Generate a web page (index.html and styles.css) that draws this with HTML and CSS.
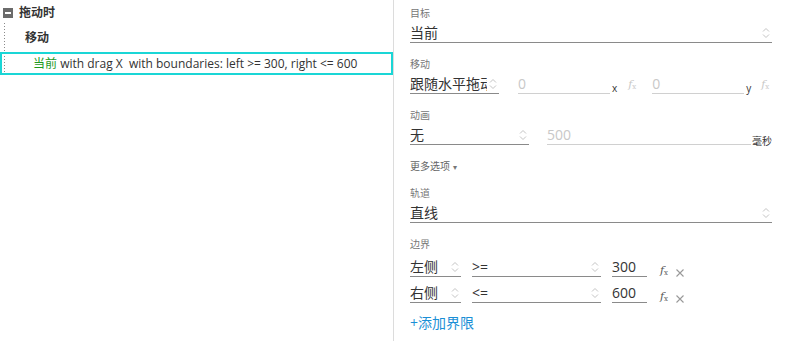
FILE: index.html
```html
<!DOCTYPE html>
<html>
<head>
<meta charset="utf-8">
<link rel="stylesheet" href="styles.css">
</head>
<body>
<div class="app">
  <div class="tree">
    <div class="node event">
      <span class="toggle"></span>
      <span class="event-name">拖动时</span>
    </div>
    <div class="children">
      <div class="node action">移动</div>
      <div class="node target selected"><span class="green">当前</span> with drag X&nbsp; with boundaries: left &gt;= 300, right &lt;= 600</div>
    </div>
  </div>
  <div class="props">
    <div class="field">
      <div class="label">目标</div>
      <div class="select full"><span class="val">当前</span><svg class="chev" viewBox="0 0 8 12"><path d="M1 4.5 L4 1.5 L7 4.5 M1 7.5 L4 10.5 L7 7.5" /></svg></div>
    </div>
    <div class="field">
      <div class="label">移动</div>
      <div class="row">
        <div class="select w-move"><span class="val clip">跟随水平拖动</span><svg class="chev" viewBox="0 0 8 12"><path d="M1 4.5 L4 1.5 L7 4.5 M1 7.5 L4 10.5 L7 7.5" /></svg></div>
        <div class="input w-xy dis">0</div><span class="unit">x</span><span class="fx dim gap"><i>f</i><sub>x</sub></span>
        <div class="input w-xy dis">0</div><span class="unit">y</span><span class="fx dim end"><i>f</i><sub>x</sub></span>
      </div>
    </div>
    <div class="field">
      <div class="label">动画</div>
      <div class="row">
        <div class="select w-anim"><span class="val">无</span><svg class="chev" viewBox="0 0 8 12"><path d="M1 4.5 L4 1.5 L7 4.5 M1 7.5 L4 10.5 L7 7.5" /></svg></div>
        <div class="input w-ms dis">500</div><span class="unit ms">毫秒</span>
      </div>
    </div>
    <div class="more">更多选项 <span class="tri">▾</span></div>
    <div class="field">
      <div class="label">轨道</div>
      <div class="select full"><span class="val">直线</span><svg class="chev" viewBox="0 0 8 12"><path d="M1 4.5 L4 1.5 L7 4.5 M1 7.5 L4 10.5 L7 7.5" /></svg></div>
    </div>
    <div class="field">
      <div class="label">边界</div>
      <div class="row bound">
        <div class="select w-side"><span class="val">左侧</span><svg class="chev" viewBox="0 0 8 12"><path d="M1 4.5 L4 1.5 L7 4.5 M1 7.5 L4 10.5 L7 7.5" /></svg></div>
        <div class="select w-op"><span class="val">&gt;=</span><svg class="chev" viewBox="0 0 8 12"><path d="M1 4.5 L4 1.5 L7 4.5 M1 7.5 L4 10.5 L7 7.5" /></svg></div>
        <div class="input w-num">300</div>
        <span class="fx"><i>f</i><sub>x</sub></span>
        <svg class="close" viewBox="0 0 10 10"><path d="M1.5 1.5 L8.5 8.5 M8.5 1.5 L1.5 8.5" /></svg>
      </div>
      <div class="row bound">
        <div class="select w-side"><span class="val">右侧</span><svg class="chev" viewBox="0 0 8 12"><path d="M1 4.5 L4 1.5 L7 4.5 M1 7.5 L4 10.5 L7 7.5" /></svg></div>
        <div class="select w-op"><span class="val">&lt;=</span><svg class="chev" viewBox="0 0 8 12"><path d="M1 4.5 L4 1.5 L7 4.5 M1 7.5 L4 10.5 L7 7.5" /></svg></div>
        <div class="input w-num">600</div>
        <span class="fx"><i>f</i><sub>x</sub></span>
        <svg class="close" viewBox="0 0 10 10"><path d="M1.5 1.5 L8.5 8.5 M8.5 1.5 L1.5 8.5" /></svg>
      </div>
      <div class="add">+添加界限</div>
    </div>
  </div>
</div>
</body>
</html>
```
FILE: styles.css
```css
* { box-sizing: border-box; }
html, body { margin: 0; padding: 0; background: #fff; }
body {
  font-family: "Open Sans", "Noto Sans CJK SC", sans-serif;
  color: #333;
  width: 786px;
  height: 341px;
  overflow: hidden;
}
.app { display: flex; height: 341px; }
.tree {
  width: 394px;
  border-right: 1px solid #dcdcdc;
  flex: none;
  padding-top: 5px;
}
.node { font-size: 12px; line-height: 16px; white-space: nowrap; }
.event { display: flex; align-items: center; padding-left: 3px; height: 16px; }
.toggle {
  width: 10px; height: 10px;
  background: #6b6b6b;
  position: relative;
  margin-right: 6px;
}
.toggle::after {
  content: ""; position: absolute; left: 2px; right: 2px; top: 4px; height: 2px; background: #fff;
}
.event-name { font-weight: bold; color: #333; }
.children {
  position: relative;
  margin-left: 4px;
  margin-top: 2px;
  padding-top: 6px;
  background-image: linear-gradient(to bottom, #8a8a8a 0, #8a8a8a 1px, transparent 1px, transparent 3px);
  background-size: 1px 3px;
  background-repeat: repeat-y;
  background-position: 0 0;
}
.action { font-weight: bold; padding-left: 21px; height: 18px; line-height: 18px; }
.target {
  margin-top: 5px;
  margin-left: -4px;
  height: 23px;
  line-height: 19px;
  padding-left: 31px;
  border: 2px solid #1ad6d6;
  width: 393px;
  color: #333;
}
.green { color: #1e9a1e; }

.props { flex: 1; padding: 6px 16px 0 16px; }
.label { font-size: 10px; color: #777; line-height: 14px; }
.field { margin-bottom: 14px; }
.select, .input {
  position: relative;
  border-bottom: 1px solid #8a8a8a;
  font-size: 14px;
  line-height: 19px;
  height: 20px;
  color: #333;
  flex: none;
}
.select .val { display: block; white-space: nowrap; overflow: hidden; }
.select.full { margin-top: 3px; }
.chev {
  position: absolute;
  right: 2px; top: 4px;
  width: 8px; height: 12px;
  fill: none; stroke: #c4c4c4; stroke-width: 1;
}
.row { display: flex; align-items: flex-end; margin-top: 3px; }
.w-move { width: 89px; }
.w-move .val { width: 77px; }
.input.dis { color: #c8c8c8; border-bottom-color: #d0d0d0; padding-left: 0; }
.w-xy { width: 92px; }
.w-move + .input { margin-left: 19px; }
.unit { font-size: 10px; color: #333; line-height: 12px; margin-left: 2px; white-space: nowrap; flex: none; }
.fx {
  font-family: "DejaVu Serif", serif;
  font-size: 11px;
  color: #555;
  line-height: 14px;
  white-space: nowrap;
  flex: none;
}
.fx i { font-style: italic; }
.fx sub { font-size: 7px; vertical-align: -1px; font-style: normal; }
.fx.dim { color: #c8c8c8; }
.row .fx.gap { margin-left: 11px; margin-right: 16px; }
.row .fx.end { margin-left: 10px; }
.w-anim { width: 119px; }
.w-ms { width: 204px; margin-left: 18px; }
.unit.ms { font-size: 10px; margin-left: 1px; line-height: 14px; margin-bottom: -3px; }
.more { font-size: 10px; color: #666; line-height: 14px; margin: 1px 0 12px 0; }
.more .tri { font-size: 8px; color: #777; }
.bound { margin-top: 6px; align-items: flex-end; }
.bound + .bound { margin-top: 6px; }
.w-side { width: 51px; }
.w-op { width: 129px; margin-left: 11px; }
.w-num { width: 35px; margin-left: 11px; }
.bound .fx { margin-left: 13px; margin-bottom: -3px; }
.close { width: 10px; height: 10px; margin-left: 7px; margin-bottom: -1px; fill: none; stroke: #999; stroke-width: 1.1; flex: none; }
.add { color: #1b8fd6; font-size: 14px; line-height: 20px; margin-top: 10px; }
```
